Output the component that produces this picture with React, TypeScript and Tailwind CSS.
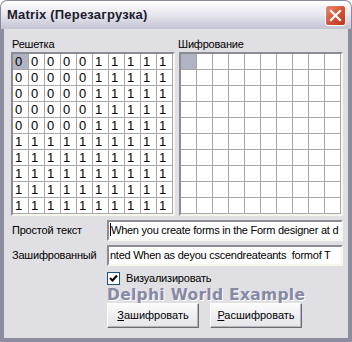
import React from "react";

const rows = [
  "0000011111",
  "0000011111",
  "0000011111",
  "0000011111",
  "0000011111",
  "1111111111",
  "1111111111",
  "1111111111",
  "1111111111",
  "1111111111",
];

function Grid({ values }: { values?: string[] }) {
  return (
    <div className="w-[164px] h-[164px] border-2 border-t-[#8c8c94] border-l-[#8c8c94] border-b-[#f6f6ee] border-r-[#f6f6ee] bg-white overflow-hidden">
      <div className="grid grid-cols-[repeat(10,16px)]">
        {Array.from({ length: 100 }).map((_, i) => {
          const r = Math.floor(i / 10);
          const c = i % 10;
          const first = i === 0;
          return (
            <div
              key={i}
              className={
                "h-[16px] w-[16px] border-r border-b border-[#a8a8a8] pl-[2px] text-[13px] leading-[15px] text-black " +
                (first ? "bg-[#b0b3c2]" : "bg-white")
              }
            >
              {values ? values[r][c] : ""}
            </div>
          );
        })}
      </div>
    </div>
  );
}

function Edit({ text, caret }: { text: string; caret?: boolean }) {
  return (
    <div className="h-[21px] w-[236px] border-2 border-t-[#8c8c94] border-l-[#8c8c94] border-b-[#f6f6ee] border-r-[#f6f6ee] bg-white overflow-hidden whitespace-pre pl-[1px] text-[11px] tracking-[-0.25px] leading-[17px] text-black">
      {caret && <span className="inline-block w-px h-[13px] bg-black align-[-2px]" />}
      {text}
    </div>
  );
}

function XPButton({ first, rest }: { first: string; rest: string }) {
  return (
    <button className="h-[25px] w-[92px] border border-t-white border-l-white border-b-[#6b6b70] border-r-[#6b6b70] bg-gradient-to-b from-[#fbfbfb] to-[#e4e4ea] text-[11px] text-black shadow-[inset_-1px_-1px_0_#b4b4bc]">
      <span className="underline">{first}</span>
      {rest}
    </button>
  );
}

export default function App() {
  return (
    <div className="w-[352px] h-[342px] flex flex-col font-['Liberation_Sans',sans-serif] select-none">
      {/* Title bar */}
      <div className="h-[29px] rounded-t-[7px] border border-b-0 border-[#8a8a9c] bg-gradient-to-b from-[#ffffff] via-[#e6e6ee] to-[#c3c3d3] flex items-center justify-between pl-[6px] pr-[5px]">
        <span className="font-bold text-[13px] text-[#1c1c2c] tracking-[0.2px]">
          Matrix (Перезагрузка)
        </span>
        <div className="w-[21px] h-[21px] rounded-[3px] border border-white bg-gradient-to-br from-[#e88a74] via-[#d5563a] to-[#b8321c] flex items-center justify-center">
          <svg width="13" height="13" viewBox="0 0 13 13">
            <path d="M2 2L11 11M11 2L2 11" stroke="white" strokeWidth="2.2" strokeLinecap="square" />
          </svg>
        </div>
      </div>

      {/* Body */}
      <div className="flex-1 border-x-[4px] border-b-[4px] border-x-[#8d8da0] border-b-[#8d8da0] bg-[#e0dfe3] pl-[7px] pr-[4px] pt-[7px] text-[11px] tracking-[-0.2px] text-black">
        <div className="flex gap-[4px]">
          <div className="flex flex-col">
            <span className="pl-[1px] leading-[16px]">Решетка</span>
            <Grid values={rows} />
          </div>
          <div className="flex flex-col">
            <span className="leading-[16px] -ml-[1px]">Шифрование</span>
            <Grid />
          </div>
        </div>

        <div className="mt-[4px] flex items-center">
          <span className="w-[96px] pl-[1px]">Простой текст</span>
          <Edit caret text="When you create forms in the Form designer at d" />
        </div>
        <div className="mt-[4px] flex items-center">
          <span className="w-[96px] pl-[1px]">Зашифрованный</span>
          <Edit text="nted When as deyou cscendreateants  formof T" />
        </div>

        <div className="ml-[96px] mt-[6px] flex items-center gap-[6px] h-[13px]">
          <div className="w-[13px] h-[13px] border border-[#1c5180] bg-white flex items-center justify-center">
            <svg width="9" height="9" viewBox="0 0 9 9">
              <path d="M1 4L3.5 6.5L8 1.5" stroke="black" strokeWidth="2" fill="none" />
            </svg>
          </div>
          <span>Визуализировать</span>
        </div>

        <div className="ml-[96px] mt-[3px] font-['DejaVu_Sans',sans-serif] font-bold text-[15.5px] leading-[14px] tracking-[0.3px] text-[#8789a5] [text-shadow:1px_1px_0_#ffffff]">
          Delphi World Example
        </div>

        <div className="ml-[96px] mt-[1px] flex gap-[11px] tracking-normal">
          <XPButton first="З" rest="ашифровать" />
          <XPButton first="Р" rest="асшифровать" />
        </div>
      </div>
    </div>
  );
}
